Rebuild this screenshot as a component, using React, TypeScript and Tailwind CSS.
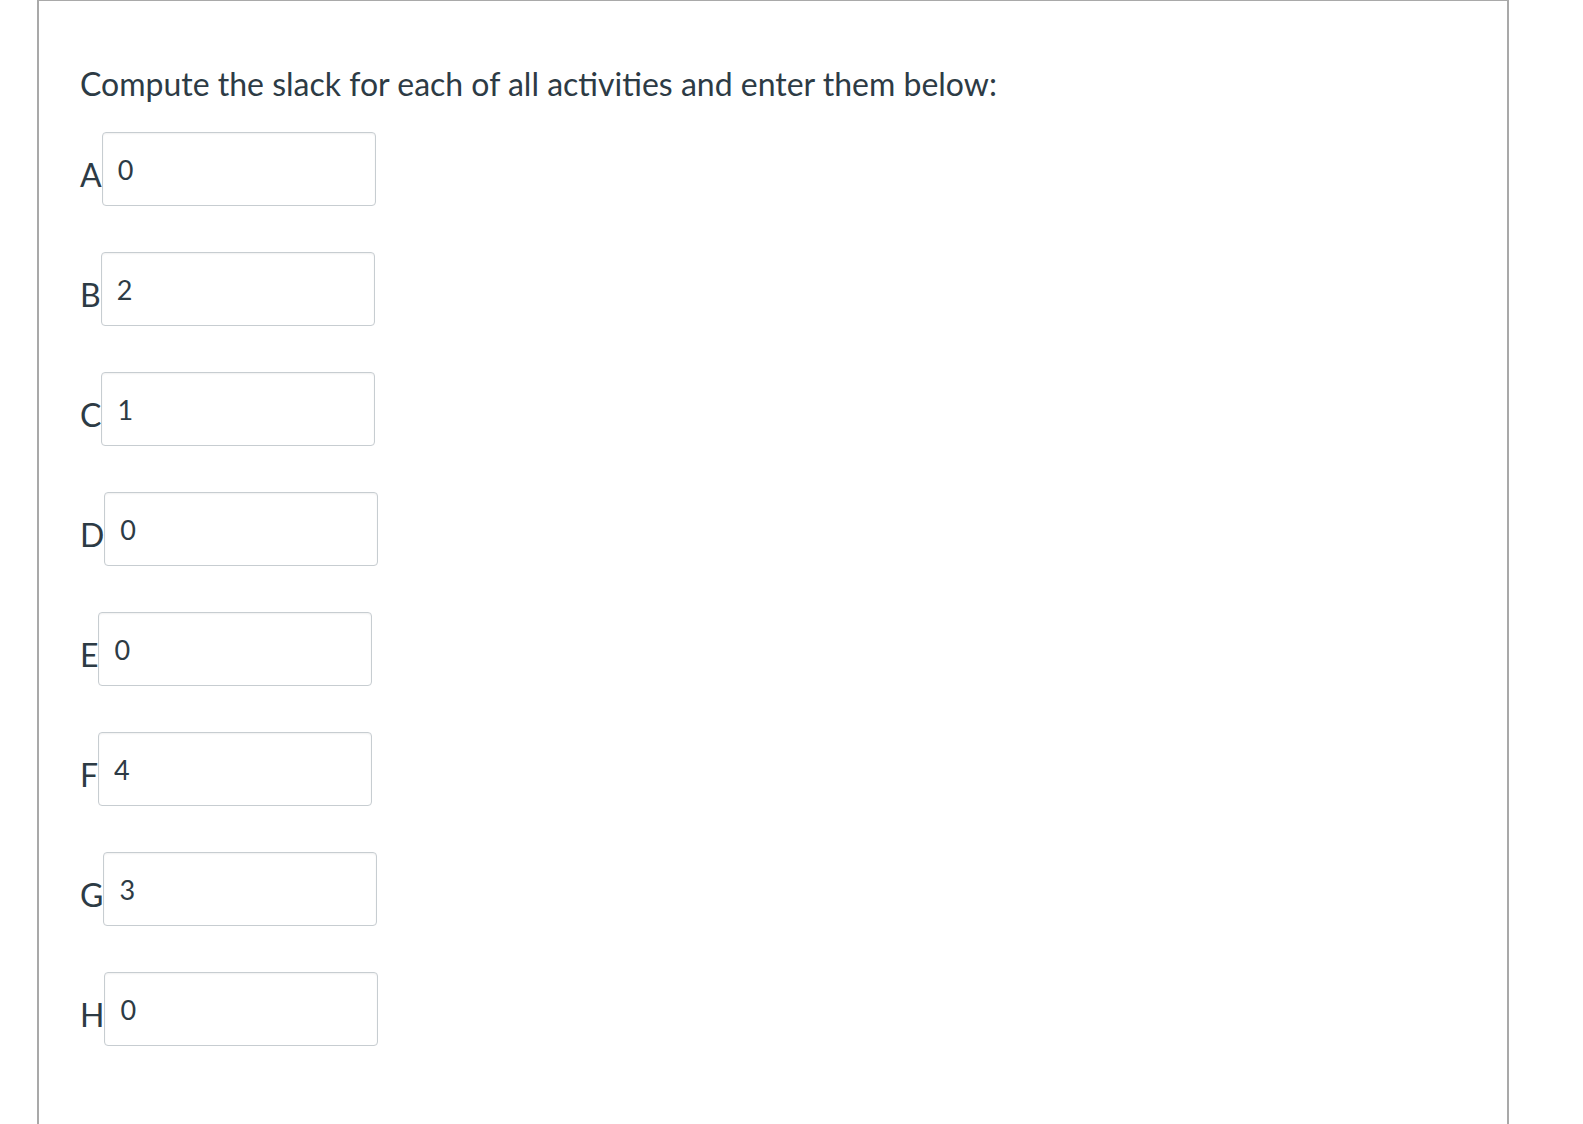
const rows: { label: string; value: string }[] = [
  { label: "A", value: "0" },
  { label: "B", value: "2" },
  { label: "C", value: "1" },
  { label: "D", value: "0" },
  { label: "E", value: "0" },
  { label: "F", value: "4" },
  { label: "G", value: "3" },
  { label: "H", value: "0" },
]

export default function App() {
  return (
    <div className="h-[1124px] bg-white overflow-hidden">
      {/* Question frame, open at the bottom */}
      <div className="ml-[37px] w-[1472px] h-full border-t border-x-2 border-[#a9a9a9] pt-[64px] pl-[41px] text-[#2d3b45] font-['Lato','Liberation_Sans',sans-serif]">
        <p className="text-[32px] leading-[38px]">
          Compute the slack for each of all activities and enter them below:
        </p>

        <div className="mt-[29px] flex flex-col gap-[46px]">
          {rows.map((row) => (
            <div key={row.label} className="flex items-end">
              <span className="text-[32px] leading-[32px] pb-[15px]">{row.label}</span>
              <input
                readOnly
                value={row.value}
                className="w-[274px] h-[74px] box-border rounded-[4px] border border-[#c7cdd1] bg-white pl-[15px] pt-[1px] text-[27px] text-[#2d3b45] font-['Lato','Liberation_Sans',sans-serif] outline-none shadow-[inset_0_1px_2px_rgba(0,0,0,0.06)]"
              />
            </div>
          ))}
        </div>
      </div>
    </div>
  )
}
